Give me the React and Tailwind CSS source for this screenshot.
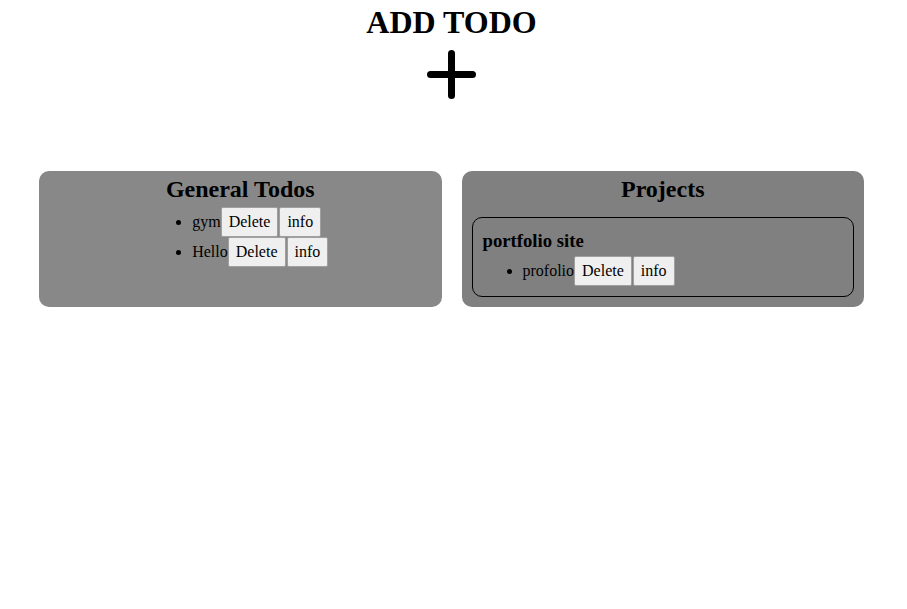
export default function App() {
  const Btn = ({ children }) => (
    <button className="bg-[#efefef] border border-[#a0a0a0] rounded-[2px] px-[7px] h-[30px] text-[16px] leading-[18px] text-black">
      {children}
    </button>
  );
  const Item = ({ label }) => (
    <li className="list-item list-disc h-[30px] leading-[30px]">
      <span className="inline-flex items-center h-[30px] leading-[18px]">
        <span>{label}</span>
        <span className="flex gap-[1px]">
          <Btn>Delete</Btn>
          <Btn>info</Btn>
        </span>
      </span>
    </li>
  );
  return (
    <div className="min-h-[609px] bg-white text-black" style={{ fontFamily: '"Liberation Serif", serif' }}>
      <div className="pt-[4px] pr-[4px] flex flex-col items-center">
        <h1 className="text-[32px] font-bold leading-[37px]">ADD TODO</h1>
        <svg width="50" height="50" viewBox="0 0 50 50" className="mt-[9px]">
          <line x1="24.5" y1="3.5" x2="24.5" y2="45.5" stroke="black" strokeWidth="7" strokeLinecap="round" />
          <line x1="3.5" y1="24.5" x2="45.5" y2="24.5" stroke="black" strokeWidth="7" strokeLinecap="round" />
        </svg>
      </div>
      <div className="grid grid-cols-2 gap-5 pl-[39px] pr-[43px] mt-[71px]">
        <div className="bg-[#888888] rounded-[10px] pt-[4px] pb-[40px] flex flex-col items-center">
          <h2 className="text-[24px] font-bold leading-[28px]">General Todos</h2>
          <ul className="mt-[4px] pl-[40px] text-[16px] list-disc">
            <Item label="gym" />
            <Item label="Hello" />
          </ul>
        </div>
        <div className="bg-[#808080] rounded-[10px] pt-[4px] px-[10px] pb-[10px] flex flex-col">
          <h2 className="text-[24px] font-bold leading-[28px] text-center">Projects</h2>
          <div className="mt-[14px] border border-black rounded-[10px] px-[10px] pt-[12px] pb-[10px]">
            <h3 className="text-[18.72px] font-bold leading-[22px]">portfolio site</h3>
            <ul className="mt-[4px] pl-[40px] text-[16px] list-disc">
              <Item label="profolio" />
            </ul>
          </div>
        </div>
      </div>
    </div>
  );
}
